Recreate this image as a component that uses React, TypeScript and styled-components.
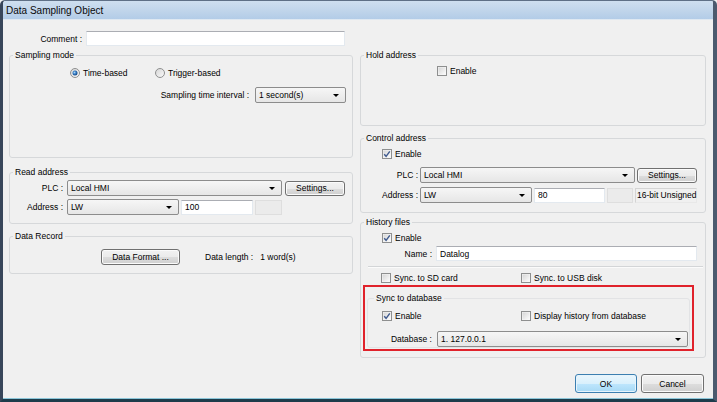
import React from "react";
import styled, { createGlobalStyle } from "styled-components";

const GlobalStyle = createGlobalStyle`
    html, body {
        margin: 0;
        padding: 0;
        background: #f0f0f0;
    }

    body {
        font-family: "Liberation Sans", Arial, sans-serif;
        font-size: 8.5px;
        color: #000;
    }
`;

const Window = styled.div`
    width: 717px;
    height: 402px;
    box-sizing: border-box;
    display: flex;
    flex-direction: column;
    overflow: hidden;

    border-top: 1px solid #5f7086;
    border-left: 3px solid #38465a;
    border-right: 4px solid #4b5a6e;
    border-bottom: 3px solid #1d3c4b;
    border-radius: 5px 5px 0 0;

    background: #f0f0f0;
    box-shadow: inset 0 -1px 0 #8cc6d9;
`;

const TitleBar = styled.div`
    display: flex;
    align-items: center;
    flex-shrink: 0;
    height: 18px;
    padding-left: 3px;

    background: linear-gradient(#cfdfef, #b3cce7);
    border-bottom: 1px solid #dfe8f1;

    font-size: 10px;
    color: #0a0a0a;
`;

const Body = styled.div`
    display: flex;
    flex-direction: column;
    flex: 1;
    padding: 11px 7px 6px 6px;
`;

const Columns = styled.div`
    display: grid;
    grid-template-columns: 344px 346px;
    column-gap: 7px;
    row-gap: 4px;
    align-items: start;
`;

const CommentRow = styled.div`
    grid-column: 1;
    grid-row: 1;
    display: flex;
    align-items: center;
    gap: 4px;
    height: 15px;
`;

const Stack = styled.div<{ $col: number }>`
    grid-column: ${props => props.$col};
    grid-row: 2;
    display: flex;
    flex-direction: column;
`;

const GroupBox = styled.fieldset<{ $height: number, $top?: number, $pad?: number, $faint?: boolean }>`
    margin: ${props => props.$top ?? 0}px 0 0 0;
    padding: ${props => props.$pad ?? 0}px 0 0 0;
    height: ${props => props.$height}px;
    min-width: 0;
    box-sizing: border-box;

    border: 1px solid ${props => props.$faint ? "#e2e3e5" : "#d6d8da"};
    border-radius: 3px;
`;

const Legend = styled.legend<{ $inset?: number }>`
    margin-left: ${props => props.$inset ?? 3}px;
    padding: 0 2px;

    line-height: 10px;
    font-size: 8.5px;
`;

const Row = styled.div<{ $top?: number, $left?: number, $gap?: number, $h?: number, $end?: boolean }>`
    display: flex;
    align-items: center;
    justify-content: ${props => props.$end ? "flex-end" : "flex-start"};
    height: ${props => props.$h ?? 16}px;
    margin-top: ${props => props.$top ?? 0}px;
    margin-left: ${props => props.$left ?? 0}px;
    margin-right: ${props => props.$end ? 6 : 0}px;
    gap: ${props => props.$gap ?? 0}px;
`;

const Label = styled.span<{ $width?: number }>`
    flex-shrink: 0;
    width: ${props => props.$width ? `${props.$width}px` : "auto"};
    text-align: ${props => props.$width ? "right" : "left"};
    white-space: pre;
`;

const TextInput = styled.input<{ $width: number }>`
    width: ${props => props.$width}px;
    height: 15px;
    box-sizing: border-box;
    margin: 0;
    padding: 0 3px;

    border: 1px solid #e3e9ef;
    border-top-color: #abadb3;
    background: #fff;
    outline: none;

    font-family: "Liberation Sans", Arial, sans-serif;
    font-size: 8.5px;
    color: #000;
`;

const DisabledBox = styled.div<{ $width: number }>`
    width: ${props => props.$width}px;
    height: 15px;
    box-sizing: border-box;

    border: 1px solid #dedede;
    background: #ebebeb;
`;

const ReadOnlyBox = styled.div<{ $width: number }>`
    width: ${props => props.$width}px;
    height: 15px;
    box-sizing: border-box;
    padding: 1px 0 0 1px;

    border: 1px solid #d4d4d4;
    border-right-color: #e8e8e8;
    border-bottom-color: #e8e8e8;
    background: #f0f0f0;

    line-height: 11px;
    white-space: nowrap;
`;

const ComboBox = styled.div<{ $width: number }>`
    display: flex;
    align-items: center;
    justify-content: space-between;
    width: ${props => props.$width}px;
    height: 16px;
    box-sizing: border-box;
    padding: 0 6px 0 3px;

    border: 1px solid #8c8c8c;
    border-radius: 2px;
    background: linear-gradient(#f6f6f6, #e6e6e6);
`;

const Arrow = styled.span`
    width: 0;
    height: 0;
    border-left: 3px solid transparent;
    border-right: 3px solid transparent;
    border-top: 3px solid #000;
`;

const Button = styled.div<{ $width: number, $height?: number, $primary?: boolean }>`
    display: flex;
    align-items: center;
    justify-content: center;
    width: ${props => props.$width}px;
    height: ${props => props.$height ?? 16}px;
    box-sizing: border-box;

    border: 1px solid ${props => props.$primary ? "#3c7fb1" : "#707070"};
    border-radius: 3px;
    background: ${props => props.$primary
        ? "linear-gradient(#eaf6fd 0%, #d9f0fc 50%, #bee6fd 51%, #a7d9f5 100%)"
        : "linear-gradient(#f2f2f2 0%, #ebebeb 50%, #dddddd 51%, #cfcfcf 100%)"};
    box-shadow: inset 0 0 0 1px ${props => props.$primary ? "#e6f4fc" : "#fbfbfb"};
`;

const Option = styled.label<{ $width?: number }>`
    display: flex;
    align-items: center;
    gap: 3px;
    width: ${props => props.$width ? `${props.$width}px` : "auto"};
    flex-shrink: 0;
    height: 12px;
    white-space: nowrap;
`;

const Divider = styled.div`
    height: 1px;
    margin: 5px 2px 0 7px;
    background: #d3d5d7;
    box-shadow: 0 1px 0 #fbfbfb;
`;

const Annotation = styled.div`
    margin: 1px 11px 0 2px;
    height: 66px;
    box-sizing: border-box;
    padding: 0 2px;

    border: 2px solid #e0222b;
`;

const Footer = styled.div`
    display: flex;
    justify-content: flex-end;
    gap: 4px;
    margin-top: auto;
    margin-right: 2px;
`;

function CheckBox(props: { checked?: boolean }) {
    return (
        <svg width="10" height="10" viewBox="0 0 10 10">
            <defs>
                <linearGradient id="cb-fill" x1="0" y1="0" x2="1" y2="1">
                    <stop offset="0" stopColor="#d6d6d6"/>
                    <stop offset="1" stopColor="#fcfcfc"/>
                </linearGradient>
            </defs>
            <rect x="0.5" y="0.5" width="9" height="9" fill="#f6f6f6" stroke="#8e8f8f"/>
            <rect x="1.5" y="1.5" width="7" height="7" fill="url(#cb-fill)"/>
            { props.checked ?
                <path d="M2.2 5.2 L4.1 7.3 L7.8 2.3" fill="none" stroke="#3f5a8e" strokeWidth="1.4"/>
            : null }
        </svg>
    );
}

function Radio(props: { checked?: boolean }) {
    return (
        <svg width="10" height="10" viewBox="0 0 10 10">
            <defs>
                <linearGradient id="rd-fill" x1="0" y1="0" x2="1" y2="1">
                    <stop offset="0" stopColor="#d4d4d4"/>
                    <stop offset="1" stopColor="#fbfbfb"/>
                </linearGradient>
                <radialGradient id="rd-dot" cx="0.4" cy="0.4" r="0.6">
                    <stop offset="0" stopColor="#a9d3f3"/>
                    <stop offset="0.55" stopColor="#2f78c2"/>
                    <stop offset="1" stopColor="#1a4a84"/>
                </radialGradient>
            </defs>
            <circle cx="5" cy="5" r="4.5" fill="url(#rd-fill)" stroke="#8e8f8f"/>
            { props.checked ?
                <circle cx="5" cy="5" r="2.5" fill="url(#rd-dot)"/>
            : null }
        </svg>
    );
}

function Combo(props: { width: number, value: string }) {
    return (
        <ComboBox $width={props.width}>
            <span>{props.value}</span>
            <Arrow/>
        </ComboBox>
    );
}

function Group(props: {
    title: string,
    height: number,
    top?: number,
    pad?: number,
    inset?: number,
    faint?: boolean,
    children?: React.ReactNode
}) {
    return (
        <GroupBox $height={props.height} $top={props.top} $pad={props.pad} $faint={props.faint}>
            <Legend $inset={props.inset}>{props.title}</Legend>
            {props.children}
        </GroupBox>
    );
}

export default function App() {
    return (
        <>
            <GlobalStyle/>
            <Window>
                <TitleBar>Data Sampling Object</TitleBar>
                <Body>
                    <Columns>
                        <CommentRow>
                            <Label $width={73}>Comment :</Label>
                            <TextInput $width={259} readOnly defaultValue=""/>
                        </CommentRow>

                        <Stack $col={1}>
                            <Group title="Sampling mode" height={108} pad={7}>
                                <Row $left={60} $h={12}>
                                    <Option $width={85}><Radio checked/>Time-based</Option>
                                    <Option><Radio/>Trigger-based</Option>
                                </Row>
                                <Row $top={8} $gap={6} $end>
                                    <Label>Sampling time interval :</Label>
                                    <Combo width={91} value="1 second(s)"/>
                                </Row>
                            </Group>

                            <Group title="Read address" height={57} top={9} pad={3}>
                                <Row>
                                    <Label $width={53}>PLC :</Label>
                                    <Row $left={4} $gap={3}>
                                        <Combo width={215} value="Local HMI"/>
                                        <Button $width={60} $height={15}>Settings...</Button>
                                    </Row>
                                </Row>
                                <Row $top={3}>
                                    <Label $width={53}>Address :</Label>
                                    <Row $left={4} $gap={2}>
                                        <Combo width={112} value="LW"/>
                                        <TextInput $width={72} readOnly defaultValue="100"/>
                                        <DisabledBox $width={27}/>
                                    </Row>
                                </Row>
                            </Group>

                            <Group title="Data Record" height={43} top={7} pad={8}>
                                <Row $left={91} $gap={25}>
                                    <Button $width={79}>Data Format ...</Button>
                                    <Row $gap={7}>
                                        <Label>Data length :</Label>
                                        <Label>1 word(s)</Label>
                                    </Row>
                                </Row>
                            </Group>
                        </Stack>

                        <Stack $col={2}>
                            <Group title="Hold address" height={76} pad={5}>
                                <Row $left={76} $h={12}>
                                    <Option><CheckBox/>Enable</Option>
                                </Row>
                            </Group>

                            <Group title="Control address" height={80} top={7} pad={5}>
                                <Row $left={21} $h={12}>
                                    <Option><CheckBox checked/>Enable</Option>
                                </Row>
                                <Row $top={7}>
                                    <Label $width={57}>PLC :</Label>
                                    <Row $left={2} $gap={2}>
                                        <Combo width={215} value="Local HMI"/>
                                        <Button $width={60} $height={15}>Settings...</Button>
                                    </Row>
                                </Row>
                                <Row $top={4}>
                                    <Label $width={57}>Address :</Label>
                                    <Row $left={2} $gap={2}>
                                        <Combo width={112} value="LW"/>
                                        <TextInput $width={71} readOnly defaultValue="80"/>
                                        <DisabledBox $width={26}/>
                                        <ReadOnlyBox $width={62}>16-bit Unsigned</ReadOnlyBox>
                                    </Row>
                                </Row>
                            </Group>

                            <Group title="History files" height={141} top={4} pad={5}>
                                <Row $left={21} $h={12}>
                                    <Option><CheckBox checked/>Enable</Option>
                                </Row>
                                <Row $top={2} $h={15}>
                                    <Label $width={71}>Name :</Label>
                                    <Row $left={4} $h={15}>
                                        <TextInput $width={261} readOnly defaultValue="Datalog"/>
                                    </Row>
                                </Row>
                                <Divider/>
                                <Row $top={5} $left={20} $h={12}>
                                    <Option $width={140}><CheckBox/>Sync. to SD card</Option>
                                    <Option><CheckBox/>Sync. to USB disk</Option>
                                </Row>
                                <Annotation>
                                    <Group title="Sync to database" height={55} top={6} pad={7} inset={6} faint>
                                        <Row $left={14} $h={12}>
                                            <Option $width={139}><CheckBox checked/>Enable</Option>
                                            <Option><CheckBox/>Display history from database</Option>
                                        </Row>
                                        <Row $top={9}>
                                            <Label $width={64}>Database :</Label>
                                            <Row $left={5}>
                                                <Combo width={251} value="1. 127.0.0.1"/>
                                            </Row>
                                        </Row>
                                    </Group>
                                </Annotation>
                            </Group>
                        </Stack>
                    </Columns>

                    <Footer>
                        <Button $width={62} $height={19} $primary>OK</Button>
                        <Button $width={63} $height={19}>Cancel</Button>
                    </Footer>
                </Body>
            </Window>
        </>
    );
}
